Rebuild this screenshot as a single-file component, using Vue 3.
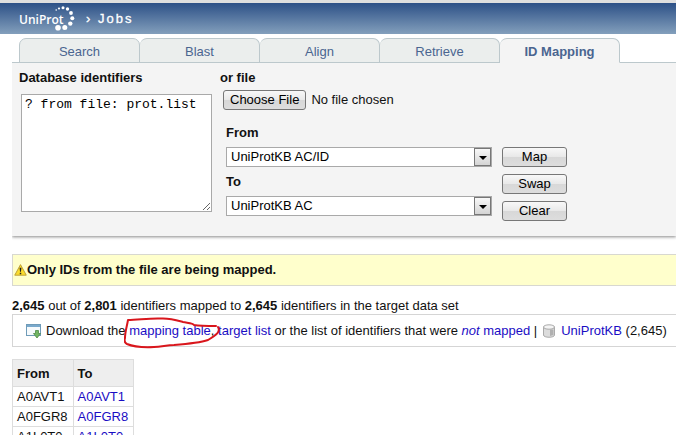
<script setup>
import { ref } from 'vue'

const tabs = ['Search', 'Blast', 'Align', 'Retrieve', 'ID Mapping']
const active = ref('ID Mapping')
const query = ref('? from file: prot.list')
const databases = ['UniProtKB AC/ID', 'UniProtKB AC']
const from = ref('UniProtKB AC/ID')
const to = ref('UniProtKB AC')
const ids = ['A0AVT1', 'A0FGR8', 'A1L0T0']

function swap() {
  const old = from.value
  from.value = to.value
  to.value = old
}
function clear() {
  query.value = ''
}
</script>

<template>
  <header class="banner">
    <a class="logo" href="#" aria-label="UniProt">
      <span class="logo-name">UniProt</span>
      <svg class="logo-dots" width="22" height="27" viewBox="0 0 22 27" fill="#fff">
        <circle cx="3.2" cy="5" r="0.8" />
        <circle cx="6" cy="3.5" r="1.1" />
        <circle cx="10" cy="2.8" r="1.5" />
        <circle cx="14.5" cy="4" r="1.7" />
        <circle cx="18" cy="8" r="1.9" />
        <circle cx="19.3" cy="13.3" r="2" />
        <circle cx="17.3" cy="18.6" r="2.2" />
        <circle cx="11.8" cy="22.4" r="2.5" />
        <circle cx="5" cy="22.7" r="2.8" />
      </svg>
    </a>
    <span class="crumb">› Jobs</span>
  </header>

  <main>
    <nav class="tabs">
      <a v-for="t in tabs" :key="t" href="#" class="tab" :class="{ active: t === active }" @click.prevent="active = t">{{ t }}</a>
    </nav>

    <form class="panel" @submit.prevent>
      <div class="ids">
        <label for="query">Database identifiers</label>
        <textarea id="query" v-model="query"></textarea>
      </div>
      <div class="options">
        <label for="file">or file</label>
        <input id="file" class="file" type="file">
        <div class="mapping">
          <div class="selects">
            <label for="from">From</label>
            <div class="select">
              <select id="from" v-model="from">
                <option v-for="d in databases" :key="d">{{ d }}</option>
              </select>
              <span class="arrow"></span>
            </div>
            <label for="to">To</label>
            <div class="select">
              <select id="to" v-model="to">
                <option v-for="d in databases" :key="d">{{ d }}</option>
              </select>
              <span class="arrow"></span>
            </div>
          </div>
          <div class="buttons">
            <button type="submit">Map</button>
            <button type="button" @click="swap">Swap</button>
            <button type="button" @click="clear">Clear</button>
          </div>
        </div>
      </div>
    </form>

    <p class="alert">
      <svg width="13" height="14" viewBox="0 0 14 14">
        <path d="M7 1.2 13.2 12.6H0.8Z" fill="#fbdc2c" stroke="#b99a35" stroke-linejoin="round" />
        <path d="M6 4.5h2L7.5 9h-1zM6.2 10h1.6v1.5H6.2z" fill="#222" />
      </svg>
      <span>Only IDs from the file are being mapped.</span>
    </p>

    <p class="summary"><b>2,645</b> out of <b>2,801</b> identifiers mapped to <b>2,645</b> identifiers in the target data set</p>

    <div class="download">
      <svg class="save" width="16" height="16" viewBox="0 0 16 16">
        <rect x="0.5" y="1.5" width="14" height="11" fill="#f6fafc" stroke="#6f9bb8" />
        <path d="M1 2h13v2H1z" fill="#79a9cc" />
        <path d="M9.5 7.5h3v3h2L11 15 7.5 10.5h2z" fill="#72b562" stroke="#4d8a45" stroke-width="0.8" />
      </svg>
      <span>Download the <span class="marked"><a href="#">mapping table</a>,<svg class="ring" width="98" height="38" viewBox="0 0 98 38" fill="none" stroke="#d9161c" stroke-width="2" stroke-linecap="round" stroke-linejoin="round">
        <path d="M92 13C84 13 76 13 70 12C69 10 64 10 59 9C52 7 46 5 37 5.5C25 5 14 7 4 7C3 13 1 19 1 25C0 28 1 30 3 31C10 34 20 34.5 30 34C37 34 43 32 50 32C63 31 75 30 84 27C92 22 97 19 94 14" />
      </svg></span> <a href="#">target list</a> or the list of identifiers that were <a href="#"><i>not</i> mapped</a> |</span>
      <svg class="db" width="14" height="14" viewBox="0 0 14 14">
        <path d="M1.5 3v8c0 3 11 3 11 0V3z" fill="#dcdcdc" stroke="#aaa" />
        <path d="M8 5.5h3.5v5.5l-3.5 1z" fill="#b0b0b0" />
        <ellipse cx="7" cy="3" rx="5.5" ry="2.2" fill="#f4f4f4" stroke="#aaa" />
      </svg>
      <span><a href="#">UniProtKB</a> (2,645)</span>
    </div>

    <table>
      <thead><tr><th>From</th><th>To</th></tr></thead>
      <tbody>
        <tr v-for="id in ids" :key="id"><td>{{ id }}</td><td><a href="#">{{ id }}</a></td></tr>
      </tbody>
    </table>
  </main>
</template>

<style>
html { overflow: hidden; }
body { margin: 0; background: #fff; }
</style>

<style scoped>
* { box-sizing: border-box; }
.banner, main { font: 13px/16px "Liberation Sans", Arial, sans-serif; color: #111; }
a { color: #1a0dc4; text-decoration: none; }
.banner { display: flex; align-items: center; height: 34px; padding-left: 19px; border-top: 3px solid #dfdfdf; background: linear-gradient(#2d5187, #839fbc); color: #fff; }
.logo { display: flex; align-items: center; width: 67px; color: #fff; }
.logo-name { font: 600 12px/16px "Open Sans", sans-serif; margin-top: 2px; }
.logo-dots { flex: none; margin-left: -11px; }
.crumb { letter-spacing: 2px; line-height: 18px; -webkit-text-stroke: 0.3px #fff; }
main { padding-left: 12px; }
.tabs { display: flex; padding: 4px 0 0 7px; }
.tab { width: 120px; height: 25px; margin-bottom: -1px; border: 1px solid #bcc8cc; border-left-width: 0; border-radius: 7px 7px 0 0; background: #ebeeed; color: #4a6590; line-height: 25px; text-align: center; }
.tab:first-child { width: 121px; border-left-width: 1px; }
.tab.active { position: relative; z-index: 1; background: #f4f4f4; border-bottom-color: #f4f4f4; font-weight: bold; }
.panel { display: flex; border-top: 1px solid #bcc8cc; background: #f4f4f4; box-shadow: 0 1px 3px #888; padding: 7px 0 24px 7px; clip-path: inset(0 0 -5px 0); }
label { display: block; font-weight: bold; }
.ids { width: 201px; }
textarea { display: block; width: 191px; height: 118px; margin: 8px 0 0 2px; padding: 2px 3px; border: 1px solid #a9a9a9; background: #fff; color: #000; font: 13px/16px "Liberation Mono", monospace; resize: both; outline: 0; }
.options { margin-bottom: -12px; }
.file { display: block; width: 240px; height: 20px; margin: 4px 0 0 3px; font: inherit; }
.file::file-selector-button, button { height: 20px; padding: 0 6px; border: 1px solid #777; border-radius: 3px; background: linear-gradient(#f8f8f8, #e8e8e8 50%, #d8d8d8 51%, #ddd); color: #000; font: 13px/16px "Liberation Sans", Arial, sans-serif; }
.file::file-selector-button { margin-right: 5px; }
.mapping { display: flex; gap: 10px; padding: 15px 0 0 6px; }
.selects { width: 266px; }
.select { position: relative; margin: 6px 0 7px; }
select { display: block; appearance: none; width: 100%; height: 20px; padding: 0 4px; border: 1px solid #a9a9a9; border-radius: 0; background: #fff; color: #000; font: inherit; }
.arrow { position: absolute; top: 1px; right: 1px; width: 17px; height: 18px; border: 1px solid #777; background: linear-gradient(#f8f8f8, #d4d4d4); pointer-events: none; }
.arrow::after { content: ""; position: absolute; top: 7px; left: 4px; border: 4px solid transparent; border-top-color: #000; border-bottom: 0; }
.buttons { display: flex; flex-direction: column; gap: 7px; padding-top: 22px; }
button { width: 65px; }
p { margin: 0; }
.alert { display: flex; align-items: center; height: 32px; margin-top: 18px; border: 1px solid #d8d8d0; border-right: 0; background: #ffffcc; padding-left: 1px; font-weight: bold; }
.summary { margin-top: 12px; }
.download { display: flex; align-items: center; height: 33px; border: 1px solid #d5d5d5; border-right: 0; padding-left: 13px; white-space: nowrap; }
.save { margin-right: 4px; }
.db { margin: 0 5px; }
.marked { position: relative; }
.ring { position: absolute; left: -5px; top: -10px; pointer-events: none; }
table { margin-top: 12px; border-collapse: collapse; }
th, td { border: 1px solid #ddd; padding: 2px 5px 1px 4px; text-align: left; }
th { background: #eee; padding: 6px 4px 4px; }
</style>
